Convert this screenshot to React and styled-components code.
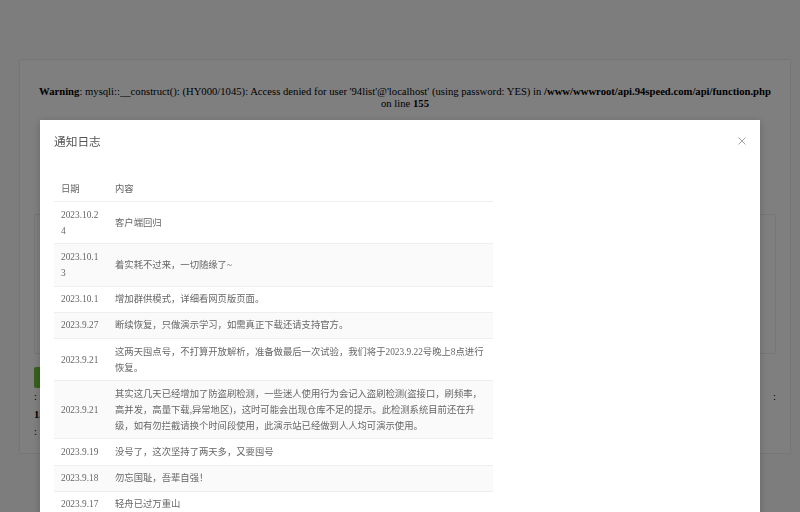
import React from "react";
import styled, { createGlobalStyle } from "styled-components";

const Global = createGlobalStyle`
  html, body { margin: 0; padding: 0; background: #fbfbfb; }
  body { font-family: "Liberation Serif", "Noto Sans CJK SC", serif; color: #000; }
`;

const Page = styled.div`
  padding: 59px 9px 0 19px;
`;

const Card = styled.div`
  background: #fff;
  border: 1px solid #ececec;
  border-radius: 2px;
  box-shadow: 0 1px 2px rgba(0,0,0,0.05);
  padding: 13px 14px 11px;
  height: 369px;
`;

const Warn = styled.div`
  font-size: 10.67px;
  line-height: 12px;
  text-align: center;
  color: #000;
  b { font-weight: bold; }
`;

const Inner = styled.div`
  margin-top: 105px;
  height: 138px;
  border: 1px solid #ececec;
  border-radius: 2px;
`;

const GreenBtn = styled.div`
  margin-top: 13px;
  width: 90px;
  height: 21px;
  border-radius: 2px;
  background: #6cc43a;
`;

const InfoLine = styled.div`
  display: flex;
  justify-content: space-between;
  font-size: 10.67px;
  line-height: 17.5px;
  white-space: nowrap;
  overflow: hidden;
  color: #000;
`;

const Overlay = styled.div`
  position: fixed;
  inset: 0;
  background: rgba(0, 0, 0, 0.5);
`;

const Modal = styled.div`
  position: fixed;
  top: 120px;
  left: 40px;
  width: 720px;
  background: #fff;
  box-shadow: 0 2px 8px rgba(0,0,0,0.2);
`;

const Header = styled.div`
  display: flex;
  align-items: center;
  justify-content: space-between;
  padding: 14px;
  height: 14px;
`;

const Title = styled.div`
  font-family: "Noto Sans CJK SC", sans-serif;
  font-size: 11.7px;
  line-height: 14px;
  color: #555;
`;

const Close = styled.svg`
  width: 8px;
  height: 8px;
`;

const Body = styled.div`
  padding: 14px 14px 20px;
`;

const Table = styled.table`
  width: 439px;
  border-collapse: collapse;
  table-layout: fixed;
  font-size: 9.33px;
  color: #666;
`;

const Row = styled.tr`
  background: ${(p) => (p.$alt ? "#fafafa" : "#fff")};
  border-bottom: 1px solid #eeeef2;
`;

const Cell = styled.td`
  padding: 4.6px 7px;
  line-height: 16px;
  vertical-align: middle;
  text-align: left;
  word-break: ${(p) => (p.$date ? "break-all" : "normal")};
`;

const Head = styled.th`
  padding: 4.6px 7px;
  line-height: 16px;
  font-weight: normal;
  text-align: left;
`;

const rows = [
  ["2023.10.24", "客户端回归"],
  ["2023.10.13", "着实耗不过来，一切随缘了~"],
  ["2023.10.1", "增加群供模式，详细看网页版页面。"],
  ["2023.9.27", "断续恢复，只做演示学习，如需真正下载还请支持官方。"],
  ["2023.9.21", "这两天囤点号，不打算开放解析，准备做最后一次试验，我们将于2023.9.22号晚上8点进行恢复。"],
  ["2023.9.21", "其实这几天已经增加了防盗刷检测，一些迷人使用行为会记入盗刷检测(盗接口，刷频率，高并发，高量下载,异常地区)，这时可能会出现仓库不足的提示。此检测系统目前还在升级，如有勿拦截请换个时间段使用，此演示站已经做到人人均可演示使用。"],
  ["2023.9.19", "没号了，这次坚持了两天多，又要囤号"],
  ["2023.9.18", "勿忘国耻，吾辈自强！"],
  ["2023.9.17", "轻舟已过万重山"],
];

export default function App() {
  return (
    <>
      <Global />
      <Page>
        <Card>
          <Warn>
            <br />
            <b>Warning</b>: mysqli::__construct(): (HY000/1045): Access denied for user '94list'@'localhost' (using password: YES) in{" "}
            <b>/www/wwwroot/api.94speed.com/api/function.php</b> on line <b>155</b>
          </Warn>
          <Inner />
          <GreenBtn />
          <InfoLine>
            <span>: in</span>
            <span>:</span>
          </InfoLine>
          <InfoLine>
            <b>155</b>
          </InfoLine>
          <InfoLine>
            <span>: in</span>
          </InfoLine>
        </Card>
      </Page>
      <Overlay />
      <Modal>
        <Header>
          <Title>通知日志</Title>
          <Close viewBox="0 0 8 8">
            <path d="M0.5 0.5 L7.5 7.5 M7.5 0.5 L0.5 7.5" stroke="#999" strokeWidth="0.9" fill="none" />
          </Close>
        </Header>
        <Body>
          <Table>
            <colgroup>
              <col style={{ width: "54px" }} />
              <col />
            </colgroup>
            <thead>
              <Row>
                <Head>日期</Head>
                <Head>内容</Head>
              </Row>
            </thead>
            <tbody>
              {rows.map(([d, c], i) => (
                <Row key={i} $alt={i % 2 === 1}>
                  <Cell $date>{d}</Cell>
                  <Cell>{c}</Cell>
                </Row>
              ))}
            </tbody>
          </Table>
        </Body>
      </Modal>
    </>
  );
}
